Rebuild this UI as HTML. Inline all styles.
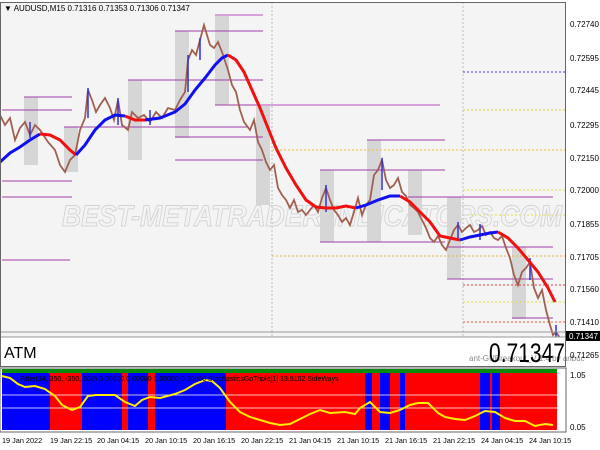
<!DOCTYPE html>
<html><head><meta charset="utf-8"><style>
body{margin:0;width:600px;height:450px;overflow:hidden;background:#fff;font-family:"Liberation Sans",sans-serif}
svg{display:block}
</style></head><body>
<svg width="600" height="450" viewBox="0 0 600 450" font-family="Liberation Sans, sans-serif">
<rect x="0" y="0" width="600" height="450" fill="#fff"/>
<rect x="0" y="2" width="566" height="364" fill="#f4f4f4"/>
<g fill="#d6d6d6">
<rect x="24" y="97" width="14" height="68"/>
<rect x="64" y="127" width="14" height="45"/>
<rect x="128" y="80" width="14" height="80"/>
<rect x="175" y="31" width="14" height="107"/>
<rect x="215" y="15" width="14" height="90"/>
<rect x="256" y="105" width="14" height="100"/>
<rect x="320" y="170" width="14" height="72"/>
<rect x="367" y="140" width="14" height="102"/>
<rect x="408" y="170" width="14" height="65"/>
<rect x="447" y="197" width="14" height="82"/>
<rect x="512" y="247" width="14" height="72"/>
</g>
<g stroke="#bbb" stroke-dasharray="2,2" stroke-width="1">
<line x1="272" y1="2" x2="272" y2="366"/>
<line x1="463" y1="2" x2="463" y2="366"/>
</g>
<g stroke="#a040a8" stroke-width="1">
<line x1="2" y1="110" x2="72" y2="110"/><line x1="24" y1="97" x2="72" y2="97"/>
<line x1="64" y1="127" x2="247" y2="127"/><line x1="2" y1="181" x2="72" y2="181"/>
<line x1="2" y1="197" x2="72" y2="197"/><line x1="128" y1="80" x2="263" y2="80"/>
<line x1="175" y1="31" x2="263" y2="31"/><line x1="175" y1="137" x2="263" y2="137"/>
<line x1="215" y1="105" x2="440" y2="105"/><line x1="175" y1="160" x2="263" y2="160"/>
<line x1="320" y1="170" x2="445" y2="170"/><line x1="367" y1="140" x2="445" y2="140"/>
<line x1="320" y1="242" x2="445" y2="242"/><line x1="408" y1="197" x2="553" y2="197"/>
<line x1="447" y1="247" x2="553" y2="247"/><line x1="447" y1="279" x2="553" y2="279"/>
<line x1="2" y1="260" x2="70" y2="260"/><line x1="512" y1="318" x2="553" y2="318"/>
</g>
<g stroke="#d9a0d9" stroke-width="2">
<line x1="215" y1="15" x2="263" y2="15"/><line x1="256" y1="105" x2="440" y2="105"/>
</g>
<g stroke-dasharray="2,2" stroke-width="1">
<line x1="272" y1="150" x2="566" y2="150" stroke="#f0c040"/>
<line x1="272" y1="256" x2="566" y2="256" stroke="#f0b040"/>
<line x1="463" y1="72" x2="566" y2="72" stroke="#4040d0"/>
<line x1="463" y1="110" x2="566" y2="110" stroke="#e0d040"/>
<line x1="463" y1="190" x2="566" y2="190" stroke="#e0e040"/>
<line x1="463" y1="215" x2="566" y2="215" stroke="#e0e040"/>
<line x1="463" y1="285" x2="566" y2="285" stroke="#e04040"/>
<line x1="463" y1="302" x2="566" y2="302" stroke="#e0e040"/>
<line x1="463" y1="322" x2="566" y2="322" stroke="#f06030"/>
</g>
<text x="62" y="226" font-size="30" font-style="italic" font-weight="bold" fill="none" stroke="#d4d4d4" stroke-width="1" textLength="500" lengthAdjust="spacingAndGlyphs">BEST-METATRADER-INDICATORS.COM</text>
<polyline fill="none" stroke="#a06050" stroke-width="1.8" points="0,115 5,125 10,118 15,140 20,128 25,122 30,135 35,125 40,130 48,142 55,150 60,165 65,172 70,160 75,155 80,130 85,118 88,90 92,100 96,112 100,105 105,98 110,108 114,120 118,100 122,125 128,130 132,112 138,118 144,115 150,122 156,112 162,118 168,108 175,110 180,100 185,92 188,60 192,50 196,55 200,40 204,25 207,35 210,45 214,48 218,42 222,52 228,70 232,85 236,92 240,110 244,122 250,130 254,120 258,142 262,150 266,162 270,170 274,165 278,188 282,195 286,200 290,208 294,200 298,212 302,210 306,215 310,210 314,205 318,212 322,198 326,188 330,200 334,210 338,215 342,222 346,218 350,225 354,212 358,198 362,215 366,205 370,200 374,175 378,170 382,160 386,180 390,188 394,185 398,178 402,192 406,196 410,205 414,208 418,212 422,220 426,228 430,238 434,242 438,236 442,245 446,250 450,240 454,230 458,225 462,232 466,228 470,225 474,232 478,230 482,226 486,235 490,232 494,238 498,240 502,236 506,248 510,258 514,275 518,285 522,272 526,268 530,262 534,288 538,298 542,290 546,310 550,325 553,335 556,332 560,338"/>
<g stroke="#3030e0" stroke-width="1.5">
<line x1="88" y1="88" x2="88" y2="118"/><line x1="118" y1="98" x2="118" y2="125"/><line x1="188" y1="55" x2="188" y2="92"/>
<line x1="200" y1="38" x2="200" y2="60"/><line x1="326" y1="185" x2="326" y2="212"/><line x1="382" y1="158" x2="382" y2="190"/>
<line x1="458" y1="222" x2="458" y2="240"/><line x1="530" y1="258" x2="530" y2="280"/><line x1="556" y1="325" x2="556" y2="340"/>
<line x1="30" y1="122" x2="30" y2="138"/><line x1="150" y1="110" x2="150" y2="125"/><line x1="480" y1="224" x2="480" y2="240"/>
</g>
<polyline fill="none" stroke="#1010f0" stroke-width="3" points="0,162 10,153 20,147 30,140 40,134"/>
<polyline fill="none" stroke="#f01010" stroke-width="3" points="40,134 50,135 60,140 70,150 76,155"/>
<polyline fill="none" stroke="#1010f0" stroke-width="3" points="76,155 85,145 95,130 105,120 115,115 125,116"/>
<polyline fill="none" stroke="#f01010" stroke-width="3" points="125,116 135,120 145,120"/>
<polyline fill="none" stroke="#1010f0" stroke-width="3" points="145,120 160,118 175,112 185,104 195,90 205,78 215,65 222,58 228,55"/>
<polyline fill="none" stroke="#f01010" stroke-width="3" points="228,55 236,60 244,72 252,90 260,108 268,128 276,148 286,168 296,185 306,200 316,207 326,208 336,208 346,206 356,208"/>
<polyline fill="none" stroke="#1010f0" stroke-width="3" points="356,208 366,205 378,200 390,196 400,196"/>
<polyline fill="none" stroke="#f01010" stroke-width="3" points="400,196 410,202 420,212 430,222 440,236 450,238 460,240"/>
<polyline fill="none" stroke="#1010f0" stroke-width="3" points="460,240 470,237 480,235 490,233 498,232"/>
<polyline fill="none" stroke="#f01010" stroke-width="3" points="498,232 508,238 518,248 528,260 538,272 548,288 555,302"/>
<text x="4" y="11" font-size="8" fill="#000">▼ AUDUSD,M15  0.71316 0.71353 0.71306 0.71347</text>
<rect x="0" y="337" width="566" height="29" fill="#fff"/>
<line x1="0" y1="332" x2="566" y2="332" stroke="#999"/>
<line x1="0" y1="337" x2="566" y2="337" stroke="#999"/>
<text x="4" y="358" font-size="16" fill="#000">ATM</text>
<text x="469" y="361" font-size="8" fill="#888">ant-GUBreakout_V 1.4 by anbuc</text>
<text x="489" y="362" font-size="27" fill="#000" textLength="76" lengthAdjust="spacingAndGlyphs">0.71347</text>
<rect x="0.5" y="2.5" width="565" height="364" fill="none" stroke="#666"/>
<g font-size="8" fill="#000">
<text x="570" y="27">0.72740</text><text x="570" y="61">0.72595</text>
<text x="570" y="93">0.72445</text><text x="570" y="128">0.72295</text>
<text x="570" y="161">0.72150</text><text x="570" y="193">0.72000</text>
<text x="570" y="227">0.71855</text><text x="570" y="260">0.71705</text>
<text x="570" y="292">0.71560</text><text x="570" y="325">0.71410</text>
<text x="570" y="358">0.71265</text>
</g>
<rect x="566" y="331" width="34" height="10" fill="#000"/>
<text x="569" y="339" font-size="8" fill="#fff">0.71347</text>
<rect x="0" y="368" width="566" height="64" fill="#fff" stroke="#666"/>
<rect x="2" y="369" width="555" height="4" fill="#0a8a0a"/>
<rect x="2" y="373" width="555" height="57" fill="#f00"/>
<g fill="#00f">
<rect x="2" y="373" width="48" height="57"/><rect x="82" y="373" width="40" height="57"/>
<rect x="128" y="373" width="20" height="57"/><rect x="155" y="373" width="71" height="57"/>
<rect x="365" y="373" width="7" height="57"/><rect x="380" y="373" width="10" height="57"/>
<rect x="400" y="373" width="5" height="57"/><rect x="480" y="373" width="10" height="57"/>
<rect x="492" y="373" width="8" height="57"/>
</g>
<line x1="2" y1="395" x2="557" y2="395" stroke="#fff" stroke-width="0.8"/>
<line x1="2" y1="408" x2="557" y2="408" stroke="#fff" stroke-width="0.8"/>
<polyline fill="none" stroke="#ffee00" stroke-width="2" points="2,376 10,378 18,384 25,387 35,386 45,389 55,396 62,405 72,410 80,407 88,396 96,395 105,395 115,395 125,402 135,406 142,400 150,397 160,398 175,394 185,390 195,384 205,380 212,381 220,388 230,402 240,412 250,417 260,420 270,423 280,425 290,424 300,419 310,414 320,410 330,413 345,412 355,414 360,408 370,402 380,412 390,413 400,410 410,405 418,403 428,403 438,413 445,417 455,419 465,420 475,416 485,411 495,412 505,418 515,421 525,421 535,426 545,424 553,425"/>
<text x="20" y="381" font-size="7" fill="#000">Filter(34, 350, -350, 500) 0.00000 0.00000 1.00000 0.00000  StochasticsGoTriple[1] 13.5102  SideWays</text>
<g font-size="8" fill="#000"><text x="570" y="378">1.05</text><text x="570" y="430">0.05</text></g>
<g font-size="7.3" fill="#000">
<text x="2" y="443">19 Jan 2022</text><text x="50" y="443">19 Jan 22:15</text>
<text x="97" y="443">20 Jan 04:15</text><text x="145" y="443">20 Jan 10:15</text>
<text x="193" y="443">20 Jan 16:15</text><text x="241" y="443">20 Jan 22:15</text>
<text x="289" y="443">21 Jan 04:15</text><text x="337" y="443">21 Jan 10:15</text>
<text x="385" y="443">21 Jan 16:15</text><text x="433" y="443">21 Jan 22:15</text>
<text x="481" y="443">24 Jan 04:15</text><text x="529" y="443">24 Jan 10:15</text>
</g>
</svg>
</body></html>
